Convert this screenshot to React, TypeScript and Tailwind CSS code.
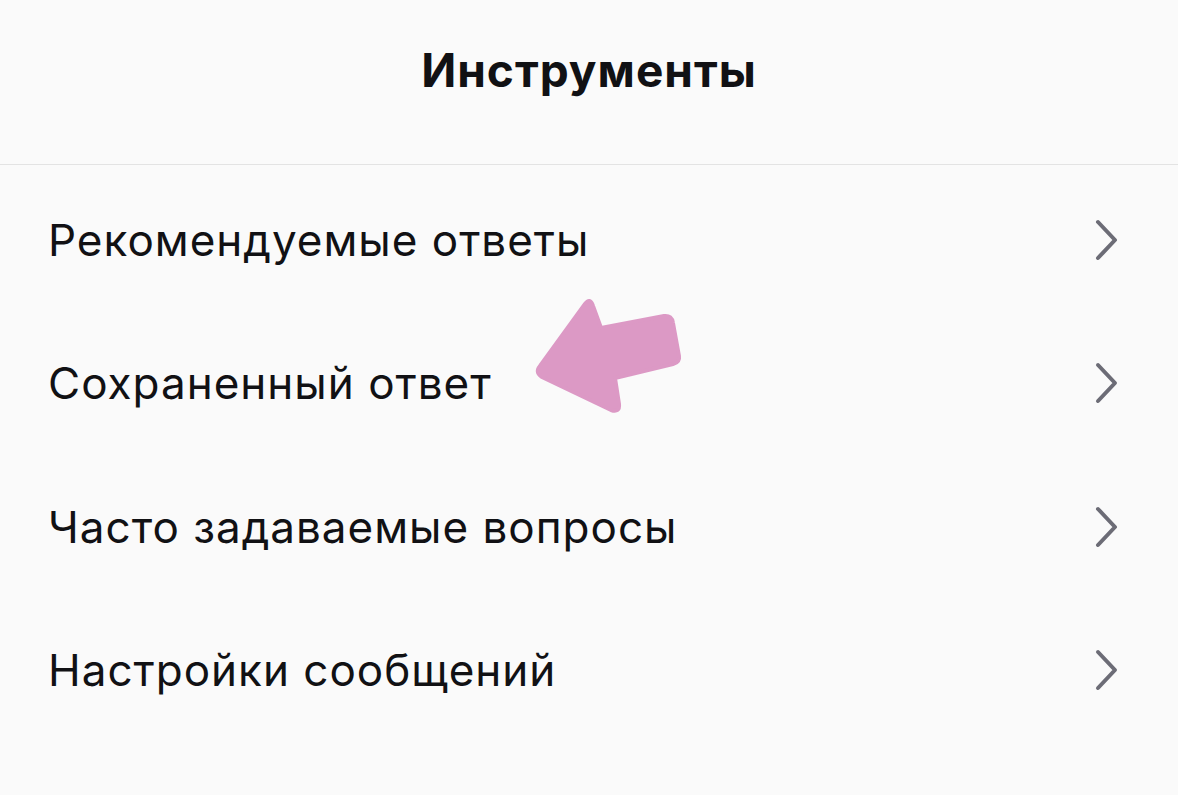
const items = [
  "Рекомендуемые ответы",
  "Сохраненный ответ",
  "Часто задаваемые вопросы",
  "Настройки сообщений",
];

const Chevron = () => (
  <svg width="26" height="42" viewBox="0 0 26 42" fill="none">
    <path d="M4 3 L21 21 L4 39" stroke="#6c6c76" strokeWidth="4" strokeLinecap="round" strokeLinejoin="round" />
  </svg>
);

export default function App() {
  return (
    <div className="relative w-[1178px] h-[795px] bg-[#fafafa] overflow-hidden" style={{ fontFamily: "Inter, 'Noto Sans', sans-serif" }}>
      <header className="h-[165px] flex items-center justify-center border-b border-[#e3e3e3] pb-[24px]">
        <h1 className="text-[46px] font-bold text-[#111114] tracking-[1px]">Инструменты</h1>
      </header>
      <ul className="pt-[3px]">
        {items.map((label) => (
          <li key={label} className="h-[143.5px] flex items-center justify-between pl-[48px] pr-[58px]">
            <span className="text-[44px] text-[#111114] tracking-[1px]">{label}</span>
            <Chevron />
          </li>
        ))}
      </ul>
      <svg className="absolute left-0 top-0 pointer-events-none" width="1178" height="795" viewBox="0 0 1178 795">
        <path
          d="M540 366 L585 304 Q590 297 593 306 L601 328 L664 316 Q672 315 673 323 L679 356 Q680 362 673 364 L615 378 L619 404 Q620 413 611 410 L544 378 Q534 373 540 366 Z"
          fill="#dc99c5"
          stroke="#dc99c5"
          strokeWidth="4"
          strokeLinejoin="round"
        />
      </svg>
    </div>
  );
}
